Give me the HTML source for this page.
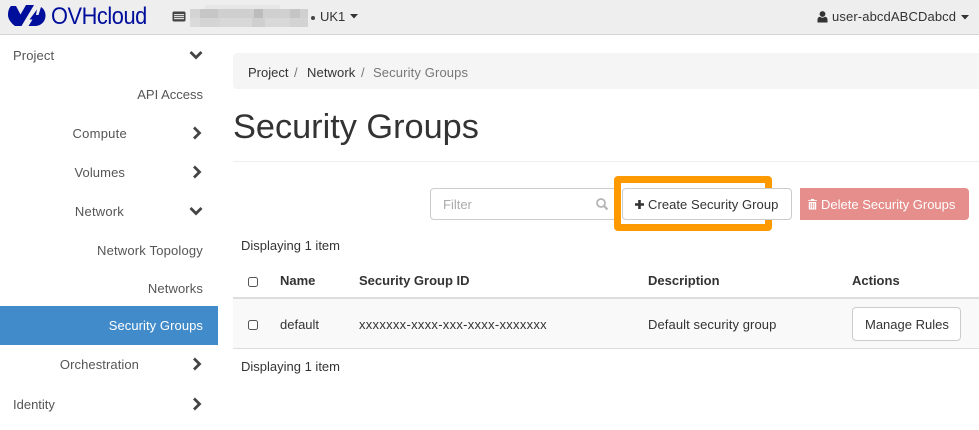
<!DOCTYPE html>
<html><head><meta charset="utf-8">
<style>
html,body{margin:0;padding:0;background:#fff}
#p{position:relative;width:979px;height:430px;overflow:hidden;font:13px/18px "Liberation Sans",sans-serif;color:#333;background:#fff}
#p div,#p span.a,#p svg{position:absolute}
.t{white-space:nowrap}
.s{color:#555}
.b{font-weight:bold;color:#333}
</style></head><body><div id="p">
<div style="left:0;top:0;width:979px;height:34px;background:#eeeeee;border-bottom:1px solid #d4d4d4"></div>
<svg style="left:0;top:0" width="50" height="32" viewBox="0 0 50 32"><path fill="#000e9c" d="M11 6L16 6L20.500 14.500L26 5L34 5L21.500 26L15 26C11 23 8 19 8 15C8 11 9 8 11 6Z"/><path fill="#000e9c" d="M41 7C44 9 45.500 12 45.500 15.500C45.500 21.500 41 26 35 26L28.500 26L32.500 19.500L29.500 19.500L37 9.500L36 15L38.500 15Z"/></svg>
<div class="t" style="left:51px;top:3px;font-size:24.5px;line-height:28px;color:#000e9c;letter-spacing:-.5px;transform:scaleX(.89);transform-origin:0 0">OVHcloud</div>
<svg style="left:172px;top:11px" width="14" height="11" viewBox="0 0 14 11"><rect x="0.500" y="0.500" width="13" height="10" rx="1.500" fill="#444"/><rect x="2" y="3" width="10" height="1.200" fill="#ddd"/><rect x="2" y="5" width="10" height="1.200" fill="#ddd"/><rect x="2" y="7" width="10" height="1.200" fill="#ddd"/></svg>
<div style="left:205px;top:5px;width:75px;height:4px;background:#e6e6e6"></div>
<div style="left:190px;top:9px;width:118px;height:9px;background:linear-gradient(90deg,#d4d4d4 0 10px,#c6c6c6 10px 28px,#cfcfcf 28px 64px,#bcbcbc 64px 73px,#d0d0d0 73px 100px,#c5c5c5 100px 110px,#d0d0d0 110px)"></div>
<div style="left:190px;top:18px;width:118px;height:9px;background:linear-gradient(90deg,#dadada 0 10px,#d4d4d4 10px 30px,#d8d8d8 30px 62px,#cfcfcf 62px 75px,#d8d8d8 75px 100px,#d3d3d3 100px)"></div>
<div style="left:311px;top:16px;width:4px;height:4px;border-radius:2px;background:#444"></div>
<div class="t" style="left:320px;top:8px;color:#333">UK1</div>
<svg style="left:350px;top:14px" width="9" height="5"><path d="M0 0H8L4 4.500Z" fill="#333"/></svg>
<svg style="left:817px;top:11px" width="11" height="12" viewBox="0 0 11 12"><circle cx="5.500" cy="3" r="2.900" fill="#333"/><path d="M0.500 11.500V8.500C0.500 7 1.500 6 3 5.800C4.500 7 6.500 7 8 5.800C9.500 6 10.500 7 10.500 8.500V11.500Z" fill="#333"/></svg>
<div class="t" style="left:832px;top:8px;letter-spacing:.12px">user-abcdABCDabcd</div>
<svg style="left:961px;top:15px" width="9" height="5"><path d="M0 0H8L4 4.500Z" fill="#333"/></svg>

<div class="t s" style="left:13px;top:47px;letter-spacing:.1px">Project</div>
<svg style="left:189px;top:50px" width="14" height="10" viewBox="0 0 14 10"><path d="M1.500 2L7 7.500L12.500 2" fill="none" stroke="#444" stroke-width="2.800"/></svg>
<div class="t s" style="right:776px;top:86px">API Access</div>
<div class="t s" style="right:852px;top:125px;letter-spacing:.25px">Compute</div>
<svg style="left:192px;top:126px" width="10" height="14" viewBox="0 0 10 14"><path d="M2 1.500L7.500 7L2 12.500" fill="none" stroke="#444" stroke-width="2.800"/></svg>
<div class="t s" style="right:854px;top:164px;letter-spacing:.1px">Volumes</div>
<svg style="left:192px;top:165px" width="10" height="14" viewBox="0 0 10 14"><path d="M2 1.500L7.500 7L2 12.500" fill="none" stroke="#444" stroke-width="2.800"/></svg>
<div class="t s" style="right:855px;top:203px;letter-spacing:.2px">Network</div>
<svg style="left:189px;top:206px" width="14" height="10" viewBox="0 0 14 10"><path d="M1.500 2L7 7.500L12.500 2" fill="none" stroke="#444" stroke-width="2.800"/></svg>
<div class="t s" style="right:776px;top:242px;letter-spacing:.18px">Network Topology</div>
<div class="t s" style="right:776px;top:280px;letter-spacing:.12px">Networks</div>
<div style="left:0;top:306px;width:218px;height:39px;background:#428bca"></div>
<div class="t" style="right:776px;top:317px;color:#fff;letter-spacing:.07px">Security Groups</div>
<div class="t s" style="right:840px;top:356px;letter-spacing:.08px">Orchestration</div>
<svg style="left:192px;top:357px" width="10" height="14" viewBox="0 0 10 14"><path d="M2 1.500L7.500 7L2 12.500" fill="none" stroke="#444" stroke-width="2.800"/></svg>
<div class="t s" style="left:13px;top:396px">Identity</div>
<svg style="left:192px;top:397px" width="10" height="14" viewBox="0 0 10 14"><path d="M2 1.500L7.500 7L2 12.500" fill="none" stroke="#444" stroke-width="2.800"/></svg>

<div style="left:233px;top:53px;width:746px;height:36px;background:#f5f5f5;border-radius:4px 0 0 4px"></div>
<div class="t" style="left:248px;top:64px">Project</div>
<div class="t" style="left:294px;top:64px;color:#777">/</div>
<div class="t" style="left:307px;top:64px;letter-spacing:.1px">Network</div>
<div class="t" style="left:361px;top:64px;color:#777">/</div>
<div class="t" style="left:373px;top:64px;color:#777;letter-spacing:.13px">Security Groups</div>
<div class="t" style="left:233px;top:107px;font-size:34.3px;line-height:40px;color:#333">Security Groups</div>
<div style="left:233px;top:161px;width:746px;height:1px;background:#eeeeee"></div>

<div style="left:430px;top:188px;width:190px;height:30px;border:1px solid #ccc;border-radius:4px;background:#fff"></div>
<div class="t" style="left:443px;top:196px;color:#aaa">Filter</div>
<svg style="left:595px;top:197px" width="14" height="14" viewBox="0 0 14 14"><circle cx="6" cy="6" r="4" fill="none" stroke="#b5b5b5" stroke-width="1.800"/><path d="M9 9L12.500 12.500" stroke="#b5b5b5" stroke-width="2.200"/></svg>
<div style="left:614px;top:176px;width:158px;height:55px;box-sizing:border-box;border:7px solid #ff9900;border-radius:4px;background:#fff"></div>
<div style="left:622px;top:188px;width:168px;height:30px;border:1px solid #ccc;border-radius:4px;background:#fff"></div>
<svg style="left:634px;top:199px" width="11" height="11" viewBox="0 0 11 11"><path d="M5.500 1V10M1 5.500H10" stroke="#333" stroke-width="2.600"/></svg>
<div class="t" style="left:648px;top:196px;letter-spacing:.05px">Create Security Group</div>
<div style="left:800px;top:188px;width:169px;height:32px;background:#e58e8b;border-radius:0 4px 4px 0"></div>
<svg style="left:807px;top:198px" width="11" height="12" viewBox="0 0 11 12"><path d="M1 3H10V2.200H7.500L7 1H4L3.500 2.200H1ZM1.800 4H9.200V11.500H1.800Z" fill="#fff"/><path d="M3.800 5V10.500M5.500 5V10.500M7.200 5V10.500" stroke="#e58e8b" stroke-width=".7"/></svg>
<div class="t" style="left:821px;top:196px;color:#fff">Delete Security Groups</div>

<div class="t" style="left:241px;top:237px">Displaying 1 item</div>
<div style="left:248px;top:277px;width:8px;height:8px;border:1px solid #555;border-radius:2.500px;background:#fff"></div>
<div class="t b" style="left:280px;top:272px">Name</div>
<div class="t b" style="left:359px;top:272px">Security Group ID</div>
<div class="t b" style="left:648px;top:272px">Description</div>
<div class="t b" style="left:852px;top:272px">Actions</div>
<div style="left:233px;top:297px;width:746px;height:2px;background:#dddddd"></div>
<div style="left:233px;top:299px;width:746px;height:49px;background:#f9f9f9"></div>
<div style="left:233px;top:348px;width:746px;height:1px;background:#dddddd"></div>
<div style="left:248px;top:320px;width:8px;height:8px;border:1px solid #555;border-radius:2.500px;background:#fff"></div>
<div class="t" style="left:280px;top:316px">default</div>
<div class="t" style="left:359px;top:316px;letter-spacing:.28px">xxxxxxx-xxxx-xxx-xxxx-xxxxxxx</div>
<div class="t" style="left:648px;top:316px;letter-spacing:.09px">Default security group</div>
<div style="left:852px;top:307px;width:107px;height:32px;border:1px solid #ccc;border-radius:4px;background:#fff"></div>
<div class="t" style="left:865px;top:316px">Manage Rules</div>
<div class="t" style="left:241px;top:358px">Displaying 1 item</div>
</div></body></html>
